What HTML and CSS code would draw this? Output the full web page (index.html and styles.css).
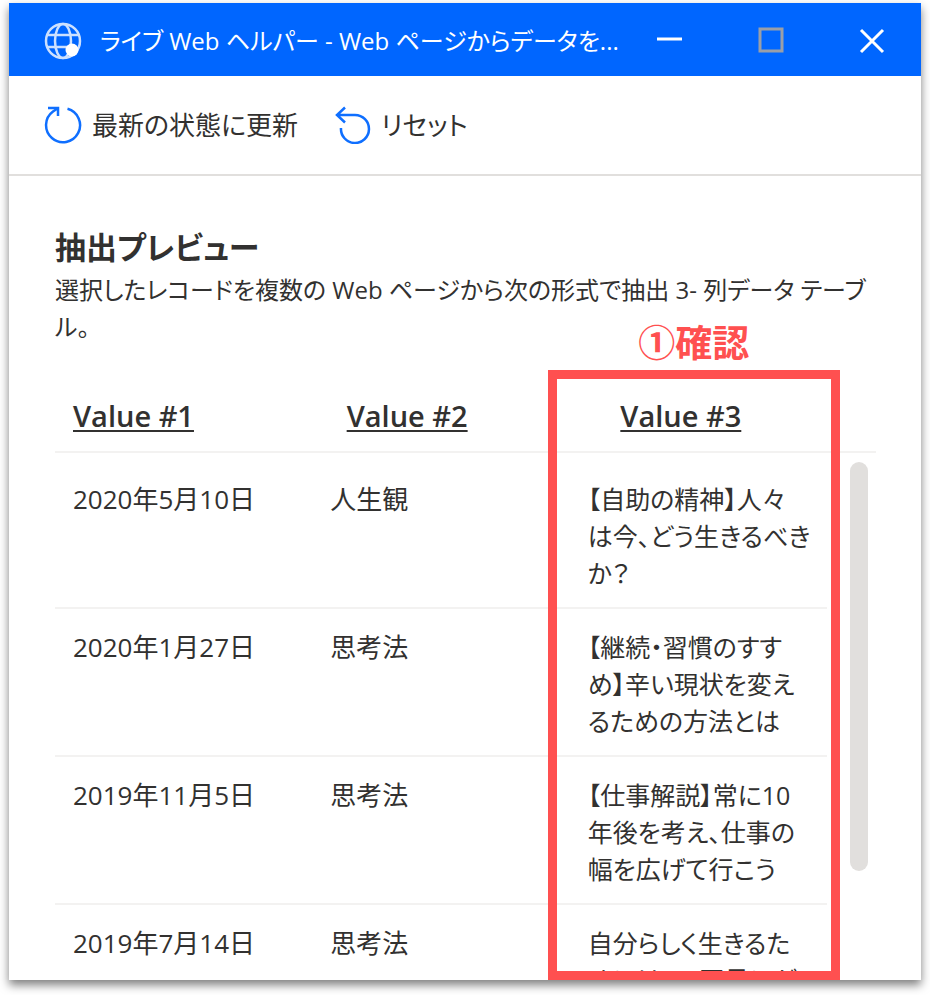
FILE: index.html
```
<!DOCTYPE html>
<html lang="ja">
<head>
  <meta charset="UTF-8">
  <meta name="viewport" content="width=device-width, initial-scale=1.0">
  <title>ライブ Web ヘルパー</title>
  <link rel="stylesheet" href="styles.css">
</head>
<body>
  <div class="window">
    <header class="title-bar">
      <svg class="logo" viewBox="0 0 38 38" fill="none" stroke="#fff" stroke-width="2.500">
        <g opacity="0.8">
          <circle cx="19" cy="19" r="17"/>
          <ellipse cx="19" cy="19" rx="8" ry="17"/>
          <path d="M3.500 13h31M3.500 25h23"/>
        </g>
        <circle cx="28" cy="28" r="6.500" fill="#fff" stroke="none"/>
      </svg>
      <h1 class="title">ライブ Web ヘルパー - Web ページからデータを...</h1>
      <div class="window-buttons">
        <button type="button" aria-label="最小化">
          <svg viewBox="0 0 28 28" fill="none" stroke="#fff" stroke-width="3"><path d="M1 12h25"/></svg>
        </button>
        <button type="button" aria-label="最大化" disabled>
          <svg viewBox="0 0 28 28" fill="none" stroke="#9a9fa8" stroke-width="3"><path d="M3 2h22v22h-22z"/></svg>
        </button>
        <button type="button" aria-label="閉じる">
          <svg viewBox="0 0 28 28" fill="none" stroke="#fff" stroke-width="3"><path d="M3 3l22 22M25 3l-22 22"/></svg>
        </button>
      </div>
    </header>

    <div class="toolbar">
      <button type="button">
        <svg viewBox="0 0 38 38" fill="none" stroke="#0f6fff" stroke-width="2.500">
          <path d="M23.500 2.800A17 17 0 1 1 9 5.500L13.500 2.500"/>
          <path d="M4 2h10v8"/>
        </svg>
        最新の状態に更新
      </button>
      <button type="button">
        <svg viewBox="0 0 38 38" fill="none" stroke="#0f6fff" stroke-width="2.500">
          <path d="M12 1.500L4 9l8 7.500M4 9h18a14 14 0 1 1-14 13"/>
        </svg>
        リセット
      </button>
    </div>

    <main class="content">
      <h2>抽出プレビュー</h2>
      <p class="description">選択したレコードを複数の Web ページから次の形式で抽出 3- 列データ テーブ<br>ル。</p>

      <div class="preview">
        <table>
          <thead>
            <tr><th scope="col">Value #1</th><th scope="col">Value #2</th><th scope="col">Value #3</th></tr>
          </thead>
          <tbody>
            <tr><td>2020年5月10日</td><td>人生観</td><td>【自助の精神】人々<br>は今、どう生きるべき<br>か？</td></tr>
            <tr><td>2020年1月27日</td><td>思考法</td><td>【継続・習慣のすす<br>め】辛い現状を変え<br>るための方法とは</td></tr>
            <tr><td>2019年11月5日</td><td>思考法</td><td>【仕事解説】常に10<br>年後を考え、仕事の<br>幅を広げて行こう</td></tr>
            <tr><td>2019年7月14日</td><td>思考法</td><td>自分らしく生きるた<br>めには、一回見にが</td></tr>
          </tbody>
        </table>
        <div class="scroll-thumb"></div>
        <div class="callout"><span>①確認</span></div>
      </div>
    </main>
  </div>
</body>
</html>
```

FILE: styles.css
```
* {
  box-sizing: border-box;
}
body {
  margin: 0;
  padding: 3px 9px 15px;
  height: 100vh;
  background: #fff;
  color: #323130;
  font-family: "Open Sans", "Noto Sans CJK JP", sans-serif;
  font-size: 26px;
  line-height: 37px;
  font-feature-settings: "palt";
  overflow: hidden;
}
button {
  padding: 0;
  border: none;
  background: none;
  color: inherit;
  font: inherit;
  font-feature-settings: inherit;
}
.window {
  display: flex;
  flex-direction: column;
  height: 100%;
  background: #fff;
  box-shadow: 0 5px 9px rgba(0, 0, 0, 0.5);
}

/* title bar */
.title-bar {
  display: flex;
  align-items: center;
  flex: none;
  height: 73px;
  padding: 2px 35px 0;
  background: #0066ff;
  color: #fff;
}
.logo {
  flex: none;
  width: 38px;
  height: 38px;
  margin-right: 18px;
}
.title {
  margin: 0;
  font-size: 24px;
  font-weight: 400;
  white-space: nowrap;
}
.window-buttons {
  display: flex;
  gap: 73px;
  margin-left: auto;
}
.window-buttons svg {
  display: block;
  width: 28px;
  height: 28px;
}

/* toolbar */
.toolbar {
  display: flex;
  align-items: center;
  flex: none;
  gap: 35px;
  height: 100px;
  padding: 0 35px;
  border-bottom: 2px solid #e1dfdd;
}
.toolbar button {
  display: flex;
  align-items: center;
  gap: 10px;
}
.toolbar svg {
  width: 38px;
  height: 38px;
}

/* content */
.content {
  display: flex;
  flex-direction: column;
  flex: 1;
  min-height: 0;
  padding: 47px 45px 0 46px;
}
h2 {
  margin: 0;
  font-size: 31px;
  font-weight: 600;
  line-height: 48px;
}
.description {
  margin: 0 0 35px;
  font-size: 24px;
}
.preview {
  position: relative;
  flex: 1;
  min-height: 0;
}
table {
  display: flex;
  flex-direction: column;
  height: 100%;
  overflow: hidden;
}
thead, tbody {
  display: block;
}
thead {
  flex: none;
  border-bottom: 2px solid #f3f2f1;
}
tbody {
  flex: 1;
  min-height: 0;
  padding: 8px 49px 0 0;
  overflow: hidden;
}
tr {
  display: grid;
  grid-template-columns: repeat(3, 1fr);
}
tbody tr {
  border-bottom: 2px solid #f3f2f1;
}
th {
  padding: 17px 18px;
  font-size: 29px;
  font-weight: 600;
  text-align: left;
  text-decoration: underline;
  text-decoration-thickness: 2px;
  text-underline-offset: 3px;
}
td {
  padding: 20px 0 15px 18px;
  white-space: nowrap;
}
td:last-child {
  font-size: 25px;
}

/* sits at the right of the rows */
.scroll-thumb {
  position: absolute;
  top: 82px;
  right: 8px;
  width: 18px;
  height: 409px;
  border-radius: 9px;
  background: #e1dfdd;
}

/* red frame round the third column */
.callout {
  position: absolute;
  top: -10px;
  right: 36px;
  bottom: 0;
  left: 60%;
  border: 9px solid #ff5050;
}
.callout span {
  position: absolute;
  right: 0;
  bottom: 100%;
  left: 0;
  padding-bottom: 19px;
  color: #ff5050;
  font-family: "Noto Sans CJK JP", sans-serif;
  font-size: 37px;
  font-weight: 700;
  text-align: center;
}
```
